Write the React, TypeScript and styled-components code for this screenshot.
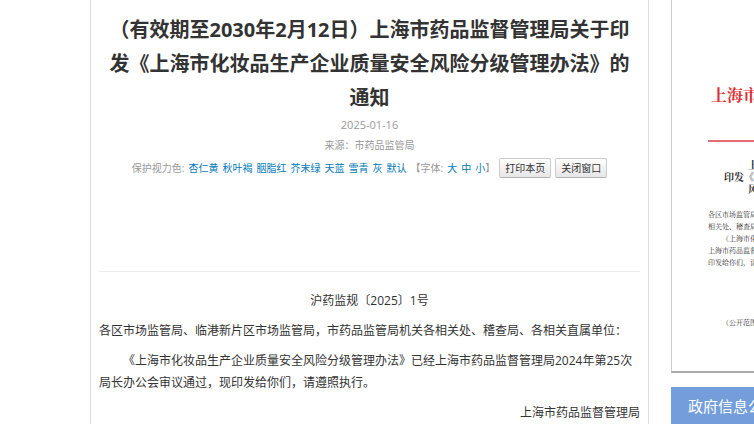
import React from "react";
import styled, { createGlobalStyle } from "styled-components";

const GlobalStyle = createGlobalStyle`
  * { box-sizing: border-box; }
  body {
    margin: 0;
    background: #fff;
    color: #333;
    font-family: "Open Sans", "Noto Sans CJK SC", sans-serif;
    font-size: 12px;
    line-height: 22px;
    text-spacing-trim: space-all;
    overflow: hidden;
  }
`;

const Page = styled.div`
  display: grid;
  grid-template-columns: minmax(0, 1fr) 83px;
  gap: 22px;
  padding-left: 90px;
  min-height: 100vh;
`;

const Article = styled.main`
  padding: 13px 8px 0;
  border: solid #ddd;
  border-width: 0 1px;
`;

const Title = styled.h1`
  margin: 0;
  padding: 0 8px;
  font-size: 20px;
  line-height: 34px;
  font-weight: 700;
  text-align: center;
`;

const Meta = styled.div`
  color: #999;
  font-size: 10px;
  line-height: 20px;
  text-align: center;
`;

const DateLine = styled(Meta)`
  font-size: 11px;
`;

const Tools = styled(Meta)`
  display: flex;
  justify-content: center;
  align-items: center;
  gap: 4px;
  margin-top: 3px;
  white-space: nowrap;
`;

const SizeGroup = styled.span`
  display: flex;
`;

const SizeLinks = styled.span`
  display: flex;
  gap: 4px;
  padding-left: 4px;
`;

const ToolLink = styled.a`
  color: #0078b8;
  text-decoration: none;
`;

const ToolButton = styled.button`
  height: 20px;
  padding: 0 5px;
  border: 1px solid #ccc;
  border-bottom-color: #b3b3b3;
  border-radius: 2px;
  background: linear-gradient(#fff, #e6e6e6);
  color: #333;
  font: inherit;
  line-height: 18px;
`;

const Content = styled.section`
  margin-top: 93px;
  padding-top: 18px;
  border-top: 1px solid #eee;
`;

const Paragraph = styled.p<{ $align?: string; $indent?: boolean }>`
  margin: 0 0 8px;
  text-align: ${(p) => p.$align ?? "left"};
  text-indent: ${(p) => (p.$indent ? "2em" : "0")};
`;

const Aside = styled.aside`
  overflow: hidden;
  white-space: nowrap;
`;

const Scan = styled.article`
  height: 373px;
  padding: 84px 0 0 36px;
  border-left: 1px solid #ccc;
  border-bottom: 2px solid #aaa;
  font-family: "Liberation Serif", "Noto Serif CJK SC", "Noto Sans CJK SC", serif;
`;

const Letterhead = styled.div`
  padding: 0 0 32px 3px;
  border-bottom: 2px solid #e46b70;
  color: #df2f36;
  font-size: 16px;
  line-height: 24px;
  font-weight: 700;
`;

const ScanTitle = styled.h2`
  display: grid;
  margin: 18px 0 13px;
  font-size: 10px;
  line-height: 12px;
  font-weight: 700;
`;

const ScanTitleLine = styled.span<{ $inset: number }>`
  padding-left: ${(p) => p.$inset}px;
`;

const ScanText = styled.p<{ $inset?: number }>`
  margin: 0;
  padding-left: ${(p) => p.$inset ?? 0}px;
  color: #333;
  font-size: 7px;
  line-height: 12px;
`;

const ScanNote = styled(ScanText)`
  margin-top: 48px;
`;

const SideHeading = styled.h2`
  margin: 14px 0 0;
  padding: 0 17px;
  background: #739edb;
  color: #fff;
  font-size: 15px;
  line-height: 38px;
  font-weight: 400;
`;

const colours = ["杏仁黄", "秋叶褐", "胭脂红", "芥末绿", "天蓝", "雪青", "灰", "默认"];
const sizes = ["大", "中", "小"];

export default function App() {
  return (
    <>
      <GlobalStyle />
      <Page>
        <Article>
          <Title>
            （有效期至2030年2月12日）上海市药品监督管理局关于印发《上海市化妆品生产企业质量安全风险分级管理办法》的通知
          </Title>
          <DateLine>2025-01-16</DateLine>
          <Meta>来源：市药品监管局</Meta>
          <Tools>
            <span>保护视力色:</span>
            {colours.map((c) => (
              <ToolLink key={c} href="#">{c}</ToolLink>
            ))}
            <SizeGroup>
              <span>【字体:</span>
              <SizeLinks>
                {sizes.map((s) => (
                  <ToolLink key={s} href="#">{s}</ToolLink>
                ))}
              </SizeLinks>
              <span>】</span>
            </SizeGroup>
            <ToolButton type="button">打印本页</ToolButton>
            <ToolButton type="button">关闭窗口</ToolButton>
          </Tools>
          <Content>
            <Paragraph $align="center">沪药监规〔2025〕1号</Paragraph>
            <Paragraph>
              各区市场监管局、临港新片区市场监管局，市药品监管局机关各相关处、稽查局、各相关直属单位：
            </Paragraph>
            <Paragraph $indent>
              《上海市化妆品生产企业质量安全风险分级管理办法》已经上海市药品监督管理局2024年第25次局长办公会审议通过，现印发给你们，请遵照执行。
            </Paragraph>
            <Paragraph $align="right">上海市药品监督管理局</Paragraph>
          </Content>
        </Article>
        <Aside>
          <Scan>
            <Letterhead>上海市</Letterhead>
            <ScanTitle>
              <ScanTitleLine $inset={40}>上</ScanTitleLine>
              <ScanTitleLine $inset={16}>印发《上</ScanTitleLine>
              <ScanTitleLine $inset={40}>风</ScanTitleLine>
            </ScanTitle>
            <ScanText>各区市场监管局</ScanText>
            <ScanText>相关处、稽查局</ScanText>
            <ScanText $inset={14}>《上海市化</ScanText>
            <ScanText>上海市药品监督</ScanText>
            <ScanText>印发给你们，请</ScanText>
            <ScanNote $inset={14}>（公开范围</ScanNote>
          </Scan>
          <SideHeading>政府信息公开</SideHeading>
        </Aside>
      </Page>
    </>
  );
}
